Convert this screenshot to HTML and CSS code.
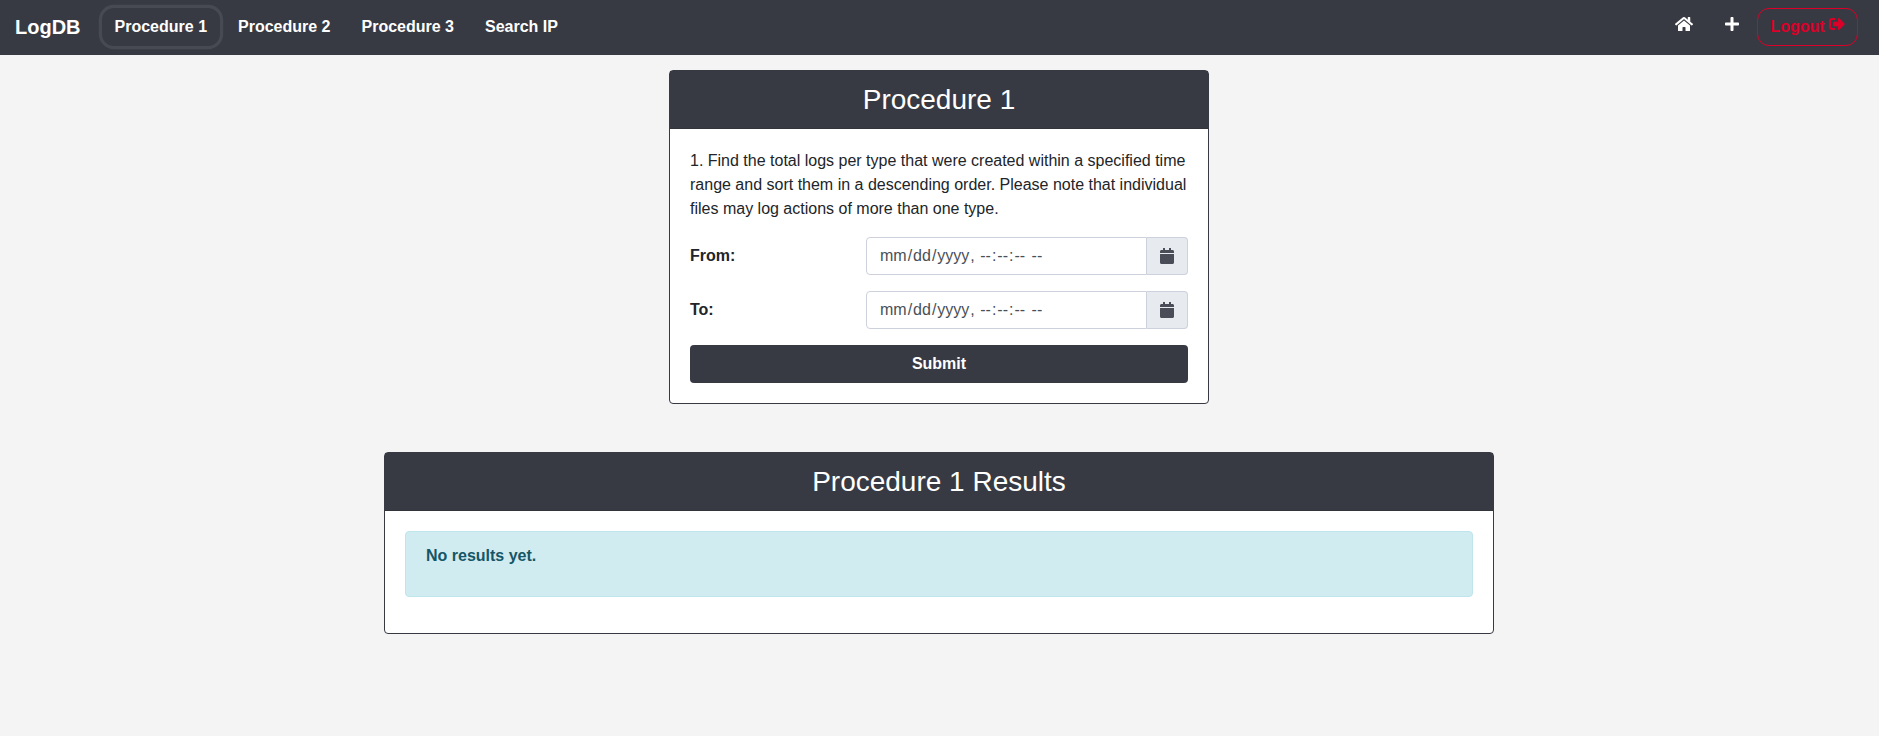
FILE: index.html
```html
<!DOCTYPE html>
<html lang="en">
<head>
<meta charset="utf-8">
<title>LogDB</title>
<link rel="stylesheet" href="styles.css">
</head>
<body>
<nav class="navbar">
  <a class="brand">LogDB</a>
  <div class="nav-links">
    <a class="btn focused">Procedure 1</a>
    <a class="btn">Procedure 2</a>
    <a class="btn">Procedure 3</a>
    <a class="btn">Search IP</a>
  </div>
  <div class="nav-actions">
    <a class="btn"><svg class="icon" width="18" height="16" viewBox="0 0 576 512"><path d="M280.37 148.26L96 300.11V464a16 16 0 0 0 16 16l112.06-.29a16 16 0 0 0 15.92-16V368a16 16 0 0 1 16-16h64a16 16 0 0 1 16 16v95.64a16 16 0 0 0 16 16.05L464 480a16 16 0 0 0 16-16V300L295.67 148.26a12.19 12.19 0 0 0-15.3 0zM571.6 251.47L488 182.56V44.05a12 12 0 0 0-12-12h-56a12 12 0 0 0-12 12v72.61L318.47 43a48 48 0 0 0-61 0L4.34 251.47a12 12 0 0 0-1.6 16.9l25.5 31A12 12 0 0 0 45.15 301l235.22-193.74a12.19 12.19 0 0 1 15.3 0L530.9 301a12 12 0 0 0 16.9-1.6l25.5-31a12 12 0 0 0-1.7-16.93z"/></svg></a>
    <a class="btn"><svg class="icon" width="14" height="16" viewBox="0 0 448 512"><path d="M416 208H272V64c0-17.67-14.33-32-32-32h-32c-17.67 0-32 14.33-32 32v144H32c-17.67 0-32 14.33-32 32v32c0 17.67 14.33 32 32 32h144v144c0 17.67 14.33 32 32 32h32c17.67 0 32-14.33 32-32V304h144c17.67 0 32-14.33 32-32v-32c0-17.67-14.33-32-32-32z"/></svg></a>
    <a class="btn logout">Logout <svg class="icon" width="16" height="16" viewBox="0 0 512 512"><path d="M497 273L329 441c-15 15-41 4.500-41-17v-96H152c-13.300 0-24-10.700-24-24v-96c0-13.300 10.700-24 24-24h136V88c0-21.400 25.900-32 41-17l168 168c9.300 9.400 9.300 24.600 0 34zM192 436v-40c0-6.600-5.400-12-12-12H96c-17.700 0-32-14.300-32-32V160c0-17.700 14.300-32 32-32h84c6.600 0 12-5.400 12-12V76c0-6.600-5.400-12-12-12H96c-53 0-96 43-96 96v192c0 53 43 96 96 96h84c6.600 0 12-5.400 12-12z"/></svg></a>
  </div>
</nav>
<main class="container">
  <section class="card form-card">
    <h3 class="card-header">Procedure 1</h3>
    <div class="card-body">
      <p class="description">1. Find the total logs per type that were created within a specified time range and sort them in a descending order. Please note that individual files may log actions of more than one type.</p>
      <div class="form-row">
        <label class="label">From:</label>
        <div class="input-group">
          <div class="datetime"><span>mm</span>/<span>dd</span>/<span>yyyy</span>, <span>--</span>:<span>--</span>:<span>--</span> <span>--</span></div>
          <div class="addon"><svg class="icon" width="14" height="16" viewBox="0 0 448 512"><path d="M12 192h424c6.600 0 12 5.400 12 12v260c0 26.500-21.500 48-48 48H48c-26.500 0-48-21.500-48-48V204c0-6.600 5.400-12 12-12zm436-44v-36c0-26.500-21.500-48-48-48h-48V12c0-6.600-5.400-12-12-12h-40c-6.600 0-12 5.400-12 12v52H160V12c0-6.600-5.400-12-12-12h-40c-6.600 0-12 5.400-12 12v52H48C21.500 64 0 85.500 0 112v36c0 6.600 5.400 12 12 12h424c6.600 0 12-5.400 12-12z"/></svg></div>
        </div>
      </div>
      <div class="form-row">
        <label class="label">To:</label>
        <div class="input-group">
          <div class="datetime"><span>mm</span>/<span>dd</span>/<span>yyyy</span>, <span>--</span>:<span>--</span>:<span>--</span> <span>--</span></div>
          <div class="addon"><svg class="icon" width="14" height="16" viewBox="0 0 448 512"><path d="M12 192h424c6.600 0 12 5.400 12 12v260c0 26.500-21.500 48-48 48H48c-26.500 0-48-21.500-48-48V204c0-6.600 5.400-12 12-12zm436-44v-36c0-26.500-21.500-48-48-48h-48V12c0-6.600-5.400-12-12-12h-40c-6.600 0-12 5.400-12 12v52H160V12c0-6.600-5.400-12-12-12h-40c-6.600 0-12 5.400-12 12v52H48C21.500 64 0 85.500 0 112v36c0 6.600 5.400 12 12 12h424c6.600 0 12-5.400 12-12z"/></svg></div>
        </div>
      </div>
      <button class="submit" type="button">Submit</button>
    </div>
  </section>
  <section class="card">
    <h3 class="card-header">Procedure 1 Results</h3>
    <div class="card-body">
      <div class="alert"><p>No results yet.</p></div>
    </div>
  </section>
</main>
</body>
</html>
```

FILE: styles.css
```css
* { box-sizing: border-box; }
body {
  margin: 0;
  background: #f4f4f4;
  color: #212529;
  font: 16px/1.5 "Liberation Sans", Arial, sans-serif;
}
.navbar {
  display: flex;
  align-items: center;
  height: 55px;
  padding: 0 21px 1px 15px;
  background: #383a43;
  color: #fff;
}
.brand {
  margin-right: 21px;
  font-size: 20px;
  line-height: 30px;
  font-weight: bold;
}
.nav-links, .nav-actions { display: flex; gap: 5px; }
.nav-actions { margin-left: auto; gap: 5.5px; }
.btn {
  height: 38px;
  padding: 6px 12px;
  border: 1px solid transparent;
  border-radius: 12px;
  font-weight: bold;
  white-space: nowrap;
}
.icon { fill: currentColor; vertical-align: -2px; }
.btn .icon { vertical-align: 0; }
.focused { box-shadow: 0 0 0 3.2px #484a53; }
.logout { border-color: #dc0028; color: #dc0028; }
.container { width: 1111px; margin: 15px auto 0; padding-right: 1px; }
.card {
  border: 1px solid #383a43;
  border-radius: 4px;
  background: #fff;
}
.form-card { width: 540px; margin: 0 auto 48px; }
.card-header {
  height: 58px;
  margin: 0;
  padding: 12px 20px;
  border-bottom: 1px solid #32343c;
  background: #383a43;
  color: #fff;
  font-size: 28px;
  line-height: 1.2;
  font-weight: 400;
  text-align: center;
}
.card-body { padding: 20px; }
.description { margin: 0 0 16px; }
.form-row { display: flex; margin-bottom: 16px; }
.label { width: 176px; padding-top: 7px; font-weight: bold; }
.input-group { display: flex; flex: 1; height: 38px; }
.datetime {
  flex: 1;
  padding: 6px 12px;
  border: 1px solid #cdd1dc;
  border-radius: 4px 0 0 4px;
  color: #495057;
  white-space: pre;
}
.datetime span { padding: 0 1px; }
.addon {
  display: flex;
  align-items: center;
  padding: 0 13px;
  border: 1px solid #cdd1dc;
  border-left: 0;
  border-radius: 0 4px 4px 0;
  background: #e7eaef;
  color: #4a4d57;
}
.submit {
  display: block;
  width: 100%;
  height: 38px;
  padding: 0;
  border: 0;
  border-radius: 4px;
  background: #383a43;
  color: #fff;
  font: bold 16px/24px "Liberation Sans", Arial, sans-serif;
}
.alert {
  margin-bottom: 16px;
  padding: 12px 20px;
  border: 1px solid #bee5eb;
  border-radius: 4px;
  background: #d0ecf1;
  color: #155666;
  font-weight: bold;
}
.alert p { margin: 0 0 16px; }
```
